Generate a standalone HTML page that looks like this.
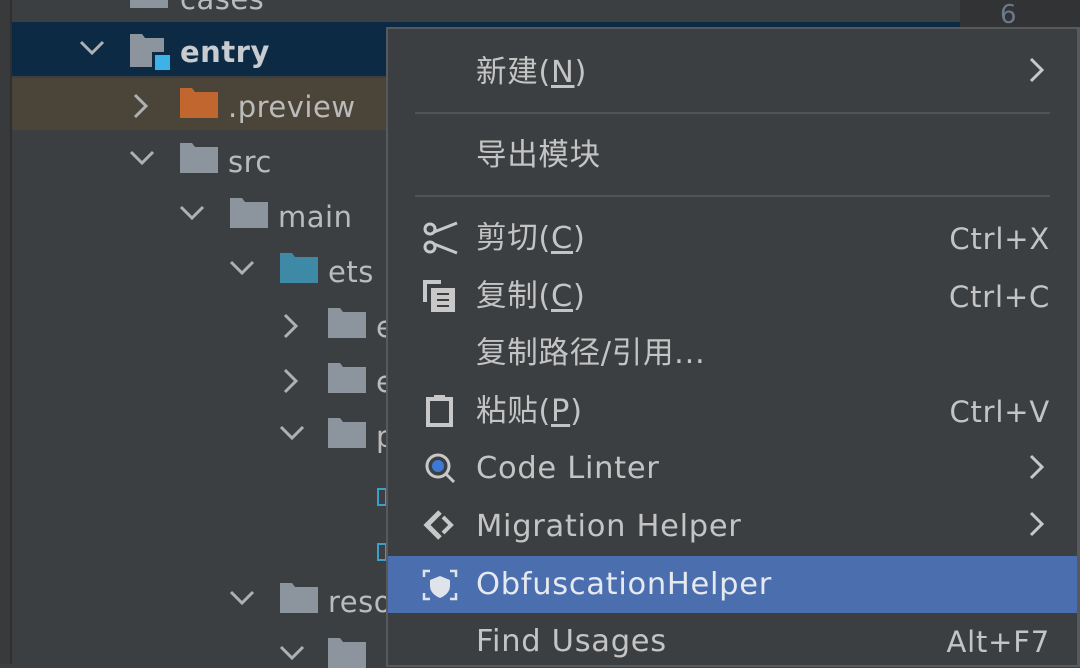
<!DOCTYPE html><html><head><meta charset="utf-8"><style>
*{margin:0;padding:0;box-sizing:border-box}
body{width:1080px;height:664px;overflow:hidden;background:#3c3f41;position:relative;font-family:"DejaVu Sans","Noto Sans CJK SC",sans-serif;color:#bbbbbb}
.a{position:absolute}
.t{font-size:29px;line-height:30px;letter-spacing:0.5px}
.fold{position:absolute;width:38px;height:30px}
.mi{position:absolute;left:476px;font-size:30.5px;line-height:30px;color:#c4c4c4;letter-spacing:0.7px}
.sc{position:absolute;right:30px;font-size:29px;line-height:30px;color:#c4c4c4;letter-spacing:0.8px}
u{text-decoration:underline;text-underline-offset:3px}
</style></head><body>
<div class="a" style="left:0;top:0;width:10px;height:664px;background:#393a3b"></div>
<div class="a" style="left:10px;top:0;width:2px;height:664px;background:#2e2f30"></div>
<div class="a" style="left:960px;top:0;width:120px;height:28px;background:#313335"></div>
<div class="a" style="left:1000px;top:0;font-size:26px;color:#6a7a8a">6</div>
<div class="a" style="left:12px;top:22px;width:948px;height:54px;background:#0d2a45"></div>
<div class="a" style="left:12px;top:78px;width:948px;height:52px;background:#4a4538"></div>
<svg class="a" style="left:130px;top:-12px" width="38" height="20"><rect x="0" y="0" width="38" height="20" fill="#8c959e"/></svg>
<div class="a t" style="left:180px;top:-16px">cases</div>

<svg width="1080" height="664" class="a" style="left:0;top:0" fill="none" stroke="#aeb1b4" stroke-width="3">
<polyline points="81,42 92,53 103,42"/>
<polyline points="135,95 146,106 135,117"/>
<polyline points="131,152 142,163 153,152"/>
<polyline points="181,207 192,218 203,207"/>
<polyline points="231,262 242,273 253,262"/>
<polyline points="285,315 296,326 285,337"/>
<polyline points="285,370 296,381 285,392"/>
<polyline points="281,427 292,438 303,427"/>
<polyline points="231,592 242,603 253,592"/>
<polyline points="281,647 292,658 303,647"/>
</svg>
<svg class="a" style="left:130px;top:34px" width="42" height="38"><path d="M0 0h12l3 4h19v29H0z" fill="#8c959e"/><rect x="22" y="18" width="18" height="18" fill="#0d2a45"/><rect x="25" y="21" width="15" height="15" fill="#3db2e8"/></svg>
<div class="a t" style="left:180px;top:37px;font-weight:bold;color:#c8ccd0">entry</div>
<svg class="fold" style="left:180px;top:88px"><path d="M0 0h12l3 4h23v26H0z" fill="#c2662f"/></svg>
<div class="a t" style="left:228px;top:92px">.preview</div>
<svg class="fold" style="left:180px;top:143px"><path d="M0 0h12l3 4h23v26H0z" fill="#8c959e"/></svg>
<div class="a t" style="left:228px;top:147px">src</div>
<svg class="fold" style="left:230px;top:198px"><path d="M0 0h12l3 4h23v26H0z" fill="#8c959e"/></svg>
<div class="a t" style="left:278px;top:202px">main</div>
<svg class="fold" style="left:280px;top:253px"><path d="M0 0h12l3 4h23v26H0z" fill="#3e8aa6"/></svg>
<div class="a t" style="left:328px;top:257px">ets</div>
<svg class="fold" style="left:328px;top:308px"><path d="M0 0h12l3 4h23v26H0z" fill="#8c959e"/></svg>
<div class="a t" style="left:376px;top:312px">e</div>
<svg class="fold" style="left:328px;top:363px"><path d="M0 0h12l3 4h23v26H0z" fill="#8c959e"/></svg>
<div class="a t" style="left:376px;top:367px">e</div>
<svg class="fold" style="left:328px;top:418px"><path d="M0 0h12l3 4h23v26H0z" fill="#8c959e"/></svg>
<div class="a t" style="left:376px;top:422px">p</div>
<div class="a" style="left:377px;top:488px;width:10px;height:18px;border:2px solid #3aa0c8"></div>
<div class="a" style="left:377px;top:543px;width:10px;height:18px;border:2px solid #3aa0c8"></div>
<svg class="fold" style="left:280px;top:583px"><path d="M0 0h12l3 4h23v26H0z" fill="#8c959e"/></svg>
<div class="a t" style="left:328px;top:587px">reso</div>
<svg class="fold" style="left:328px;top:638px"><path d="M0 0h12l3 4h23v26H0z" fill="#8c959e"/></svg>

<div class="a" style="left:386px;top:27px;width:694px;height:640px;background:#3c3f41;border:2px solid #575a5c;border-right-width:3px"></div>
<div class="a" style="left:415px;top:112px;width:635px;height:2px;background:#515456"></div>
<div class="a" style="left:415px;top:195px;width:635px;height:2px;background:#515456"></div>
<div class="a" style="left:388px;top:556px;width:689px;height:57px;background:#4b6eaf"></div>

<div class="mi" style="top:58px">新建(<u>N</u>)</div>
<div class="mi" style="top:141px">导出模块</div>
<div class="mi" style="top:224px">剪切(<u>C</u>)</div>
<div class="mi" style="top:282px">复制(<u>C</u>)</div>
<div class="mi" style="top:339px">复制路径/引用...</div>
<div class="mi" style="top:397px">粘贴(<u>P</u>)</div>
<div class="mi" style="top:454px">Code Linter</div>
<div class="mi" style="top:512px">Migration Helper</div>
<div class="mi" style="top:570px;color:#e6e9ef">ObfuscationHelper</div>
<div class="mi" style="top:627px">Find Usages</div>
<div class="sc" style="top:224px">Ctrl+X</div>
<div class="sc" style="top:282px">Ctrl+C</div>
<div class="sc" style="top:397px">Ctrl+V</div>
<div class="sc" style="top:627px">Alt+F7</div>

<svg width="1080" height="664" class="a" style="left:0;top:0" fill="none" stroke="#c8c8c8" stroke-width="3">
<polyline points="1031,59 1042,70 1031,81"/>
<polyline points="1031,456 1042,467 1031,478"/>
<polyline points="1031,513 1042,524 1031,535"/>
<circle cx="430" cy="229" r="5"/><circle cx="430" cy="247" r="5"/>
<line x1="434" y1="232" x2="457" y2="223"/><line x1="434" y1="244" x2="457" y2="253"/>
<path d="M425 302v-20h16" stroke-width="4"/>
<rect x="431" y="288" width="24" height="24" fill="#c8c8c8" stroke="none"/>
<line x1="437" y1="294" x2="449" y2="294" stroke="#3c3f41" stroke-width="2"/>
<line x1="437" y1="300" x2="449" y2="300" stroke="#3c3f41" stroke-width="2"/>
<line x1="437" y1="306" x2="449" y2="306" stroke="#3c3f41" stroke-width="2"/>
<rect x="428" y="399" width="23" height="26" stroke-width="4"/>
<rect x="434" y="395" width="11" height="6" fill="#c8c8c8" stroke="none"/>
<circle cx="438" cy="466" r="11" stroke-width="3"/>
<line x1="446" y1="474" x2="454" y2="482"/>
<circle cx="438" cy="466" r="6" fill="#3d7ad6" stroke="none"/>
<path d="M440 512l-13 13l13 13" stroke-width="5"/>
<path d="M443 517l8 8l-8 8" stroke-width="4"/>
<path d="M424 577v-6h6M450 571h6v6M456 593v6h-6M430 599h-6v-6" stroke="#dfe3ea" stroke-width="2.5"/>
<path d="M440 576l10 4v6c0 6-5 10-10 12c-5-2-10-6-10-12v-6z" fill="#dfe3ea" stroke="none"/>
</svg>
</body></html>
